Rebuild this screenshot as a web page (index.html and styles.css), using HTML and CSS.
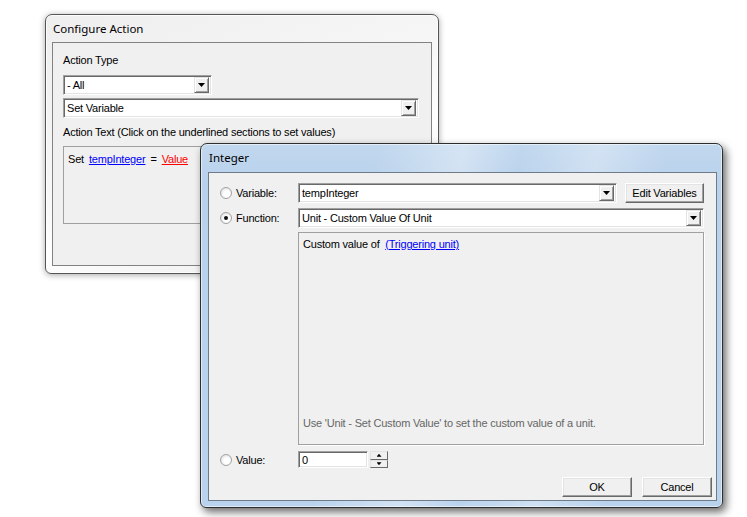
FILE: index.html
```html
<!DOCTYPE html>
<html lang="en">

<head>
    <meta charset="utf-8">
    <title>Configure Action</title>
    <link rel="stylesheet" href="styles.css">
</head>

<body>
    <!-- dialog behind -->
    <section class="win win-back">
        <div class="win-title">Configure Action</div>
        <div class="client back-client">
            <div class="lbl">Action Type</div>
            <div class="combo combo-type">
                <span class="combo-text">- All</span>
                <span class="drop"><i class="tri"></i></span>
            </div>
            <div class="combo combo-action">
                <span class="combo-text">Set Variable</span>
                <span class="drop"><i class="tri"></i></span>
            </div>
            <div class="lbl lbl-text">Action Text (Click on the underlined sections to set values)</div>
            <div class="action-box">
                <span>Set</span>
                <span class="link link-var">tempInteger</span>
                <span>=</span>
                <span class="link link-val">Value</span>
            </div>
        </div>
    </section>

    <!-- active dialog -->
    <section class="win win-front">
        <div class="win-title">Integer</div>
        <div class="client front-client">
            <div class="opt">
                <span class="radio"></span>
                <span>Variable:</span>
            </div>
            <div class="row">
                <div class="combo combo-var">
                    <span class="combo-text">tempInteger</span>
                    <span class="drop"><i class="tri"></i></span>
                </div>
                <button class="btn btn-edit">Edit Variables</button>
            </div>

            <div class="opt">
                <span class="radio checked"></span>
                <span>Function:</span>
            </div>
            <div class="row">
                <div class="combo combo-fn">
                    <span class="combo-text">Unit - Custom Value Of Unit</span>
                    <span class="drop"><i class="tri"></i></span>
                </div>
            </div>

            <div></div>
            <div class="fn-panel">
                <div>Custom value of &nbsp;<span class="link link-var">(Triggering unit)</span></div>
                <div class="hint">Use 'Unit - Set Custom Value' to set the custom value of a unit.</div>
            </div>

            <div class="opt">
                <span class="radio"></span>
                <span>Value:</span>
            </div>
            <div class="row">
                <div class="num">0</div>
                <div class="spin">
                    <span class="spin-btn"><i class="tri tri-up"></i></span>
                    <span class="spin-btn"><i class="tri tri-small"></i></span>
                </div>
            </div>

            <div class="footer">
                <button class="btn btn-dlg">OK</button>
                <button class="btn btn-dlg">Cancel</button>
            </div>
        </div>
    </section>
</body>
</html>
```

FILE: styles.css
```css
html,
body {
    margin: 0;
}

body {
    width: 747px;
    height: 517px;
    overflow: hidden;
    position: relative;
    background: #fff;
    font-family: "Liberation Sans", Arial, sans-serif;
    font-size: 11px;
    letter-spacing: -0.2px;
    color: #000;
}

/* windows */
.win {
    position: absolute;
    box-sizing: border-box;
    display: flex;
    flex-direction: column;
    border: 1px solid #555;
    border-radius: 7px 7px 6px 6px;
}

.win-title {
    font-family: "Noto Sans", "Open Sans", sans-serif;
    font-size: 11.5px;
    letter-spacing: 0;
    color: #000;
    padding-left: 1px;
}

.client {
    flex: 1;
    box-sizing: border-box;
    background: #f0f0f0;
    border: 1px solid #8a8a8a;
}

.win-back {
    left: 45px;
    top: 14px;
    width: 394px;
    height: 260px;
    padding: 0 6px 7px 6px;
    background: linear-gradient(160deg, #eeeeee 0%, #f7f7f7 45%, #ffffff 60%, #f1f1f1 80%, #f6f6f6 100%);
    box-shadow: inset 0 0 0 1px rgba(255, 255, 255, 0.8), 0 1px 6px rgba(0, 0, 0, 0.35);
}

.win-back .win-title {
    height: 27px;
    line-height: 27px;
}

.win-front {
    left: 200px;
    top: 143px;
    width: 523px;
    height: 365px;
    padding: 0 5px 6px 7px;
    border-color: #2e2e2e;
    background:
        linear-gradient(100deg, rgba(255, 255, 255, 0) 30%, rgba(255, 255, 255, 0.35) 45%, rgba(255, 255, 255, 0) 55%, rgba(255, 255, 255, 0.3) 68%, rgba(255, 255, 255, 0) 80%),
        linear-gradient(to bottom, #c1d7ee 0%, #b9d2ec 10%, #bad3ed 100%);
    box-shadow: inset 0 0 0 1px rgba(255, 255, 255, 0.55), 3px 4px 8px rgba(0, 0, 0, 0.6);
}

.win-front .win-title {
    height: 28px;
    line-height: 28px;
}

/* back dialog */
.back-client {
    padding: 11px 10px 0 10px;
    border-color: #828282;
}

.lbl {
    line-height: 13px;
}

.lbl-text {
    margin-top: 8px;
}

.combo {
    box-sizing: border-box;
    height: 20px;
    display: flex;
    align-items: center;
    background: #fff;
    border: 1px solid;
    border-color: #a0a0a0 #fff #fff #a0a0a0;
    box-shadow: inset 1px 1px 0 #696969, inset -1px -1px 0 #e3e3e3;
    padding: 1px 2px 1px 3px;
}

.combo-text {
    flex: 1;
    white-space: nowrap;
}

.drop {
    box-sizing: border-box;
    width: 15px;
    height: 16px;
    display: flex;
    align-items: center;
    justify-content: center;
    background: #f0f0f0;
    border: 1px solid;
    border-color: #e3e3e3 #696969 #696969 #e3e3e3;
    box-shadow: inset 1px 1px 0 #fff, inset -1px -1px 0 #a0a0a0;
}

.tri {
    display: block;
    width: 7px;
    height: 4px;
    background: #000;
    clip-path: polygon(0 0, 100% 0, 50% 100%);
}

.tri-up {
    width: 5px;
    height: 3px;
    clip-path: polygon(50% 0, 100% 100%, 0 100%);
}

.tri-small {
    width: 5px;
    height: 3px;
}

.combo-type {
    width: 149px;
    margin-top: 8px;
}

.combo-action {
    width: 356px;
    margin-top: 3px;
}

.action-box {
    box-sizing: border-box;
    width: 355px;
    height: 78px;
    margin-top: 7px;
    padding: 6px 4px;
    border: 1px solid #a0a0a0;
    display: flex;
    gap: 5px;
    align-items: flex-start;
    line-height: 13px;
}

.link {
    text-decoration: underline;
}

.link-var {
    color: #0000ff;
}

.link-val {
    color: #ff0000;
}

/* integer dialog */
.front-client {
    display: grid;
    grid-template-columns: 78px 406px;
    grid-template-rows: 20px 20px 212px 18px 20px;
    row-gap: 5px;
    padding: 10px 13px 0 11px;
    border-color: #6f7b88;
}

.front-client > :nth-child(5),
.front-client > :nth-child(6) {
    margin-top: -1px;
}

.opt {
    display: flex;
    align-items: center;
    gap: 4px;
}

.radio {
    box-sizing: border-box;
    width: 12px;
    height: 12px;
    border-radius: 50%;
    border: 1px solid #a2a2a2;
    background: radial-gradient(circle at 60% 60%, #ffffff 35%, #e4e4e4 75%, #d0d0d0 100%);
    display: flex;
    align-items: center;
    justify-content: center;
}

.radio.checked::after {
    content: "";
    width: 4px;
    height: 4px;
    border-radius: 50%;
    background: #111;
}

.row {
    display: flex;
    align-items: stretch;
}

.combo-var {
    width: 319px;
}

.combo-fn {
    width: 406px;
}

.btn {
    box-sizing: border-box;
    font-family: inherit;
    font-size: 11px;
    letter-spacing: -0.2px;
    color: #000;
    background: #f0f0f0;
    border: 1px solid;
    border-color: #fff #696969 #696969 #fff;
    box-shadow: inset -1px -1px 0 #a0a0a0, inset 1px 1px 0 #e3e3e3;
    padding: 0;
}

.btn-edit {
    width: 79px;
    margin-left: 8px;
}

.fn-panel {
    box-sizing: border-box;
    margin-top: -1px;
    height: 213px;
    border: 1px solid #a0a0a0;
    box-shadow: 1px 1px 0 #fff;
    padding: 5px 4px 14px 4px;
    display: flex;
    flex-direction: column;
    justify-content: space-between;
    line-height: 13px;
}

.hint {
    color: #666;
}

.front-client > .opt:nth-last-child(3) {
    margin-top: 1px;
}

.num {
    box-sizing: border-box;
    width: 70px;
    margin-top: 1px;
    background: #fff;
    border: 1px solid;
    border-color: #a0a0a0 #fff #fff #a0a0a0;
    box-shadow: inset 1px 1px 0 #696969, inset -1px -1px 0 #e3e3e3;
    padding: 1px 3px;
    line-height: 14px;
}

.spin {
    width: 18px;
    margin-left: 2px;
    margin-top: 1px;
    display: flex;
    flex-direction: column;
}

.spin-btn {
    flex: 1;
    display: flex;
    align-items: center;
    justify-content: center;
    box-sizing: border-box;
    background: #f0f0f0;
    border: 1px solid;
    border-color: #e3e3e3 #696969 #696969 #e3e3e3;
}

.footer {
    grid-column: 1 / 3;
    display: flex;
    justify-content: flex-end;
    gap: 10px;
    margin-right: -8px;
    margin-top: 4px;
}

.btn-dlg {
    width: 70px;
    height: 20px;
}
```
